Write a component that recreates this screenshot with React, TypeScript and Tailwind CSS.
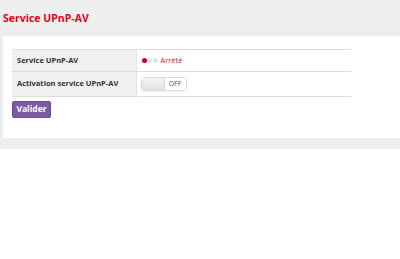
import React from "react";

export default function App() {
  return (
    <div className="w-[400px] h-[259px] bg-white" style={{ fontFamily: '"Open Sans", "Liberation Sans", sans-serif' }}>
      <div className="bg-[#eeeeee] pb-[11px]">
        <div className="h-[36px] flex items-center pl-[3px] pt-[1px]">
          <h1 className="text-[10.5px] font-bold text-[#e3001b] leading-none">Service UPnP-AV</h1>
        </div>
        <div className="ml-[3px] bg-white pt-[13px] pb-[20px] pl-[9px]">
          <table className="w-[339px] border-collapse text-[7.5px]">
            <tbody>
              <tr className="h-[22px] border-t border-b border-[#dddddd]">
                <td className="w-[124px] bg-[#f0f0f0] pl-[5px] font-bold text-[#333333]">Service UPnP-AV</td>
                <td className="pl-[5px] border-l border-[#e4e4e4]">
                  <div className="flex items-center">
                    <span className="w-[5px] h-[5px] rounded-full bg-[#c8001e]" />
                    <span className="w-[5px] h-[5px] rounded-full bg-[#e2e2e2] ml-[0.5px]" />
                    <span className="w-[5px] h-[5px] rounded-full bg-[#e2e2e2] ml-[0.5px]" />
                    <span className="ml-[3px] text-[#d0202a]">Arrêté</span>
                  </div>
                </td>
              </tr>
              <tr className="h-[25px] border-b border-[#dddddd]">
                <td className="bg-[#f0f0f0] pl-[5px] font-bold text-[#333333]">Activation service UPnP-AV</td>
                <td className="pl-[4px] border-l border-[#e4e4e4]">
                  <div className="flex w-[46px] h-[14px] rounded-[3px] border border-[#dcdcdc] overflow-hidden shadow-[0_1px_1px_rgba(0,0,0,0.06)]">
                    <div className="w-[23px] bg-gradient-to-b from-[#f4f4f4] to-[#e2e2e2] border-r border-[#d8d8d8]" />
                    <div className="flex-1 bg-white flex items-center justify-center text-[7px] text-[#555555]">OFF</div>
                  </div>
                </td>
              </tr>
            </tbody>
          </table>
          <button className="mt-[4px] w-[39px] h-[17px] rounded-[2px] bg-[#7b5aa6] border border-[#6a4b94] text-white text-[8.5px] font-bold flex items-center justify-center leading-none">
            Valider
          </button>
        </div>
      </div>
    </div>
  );
}
